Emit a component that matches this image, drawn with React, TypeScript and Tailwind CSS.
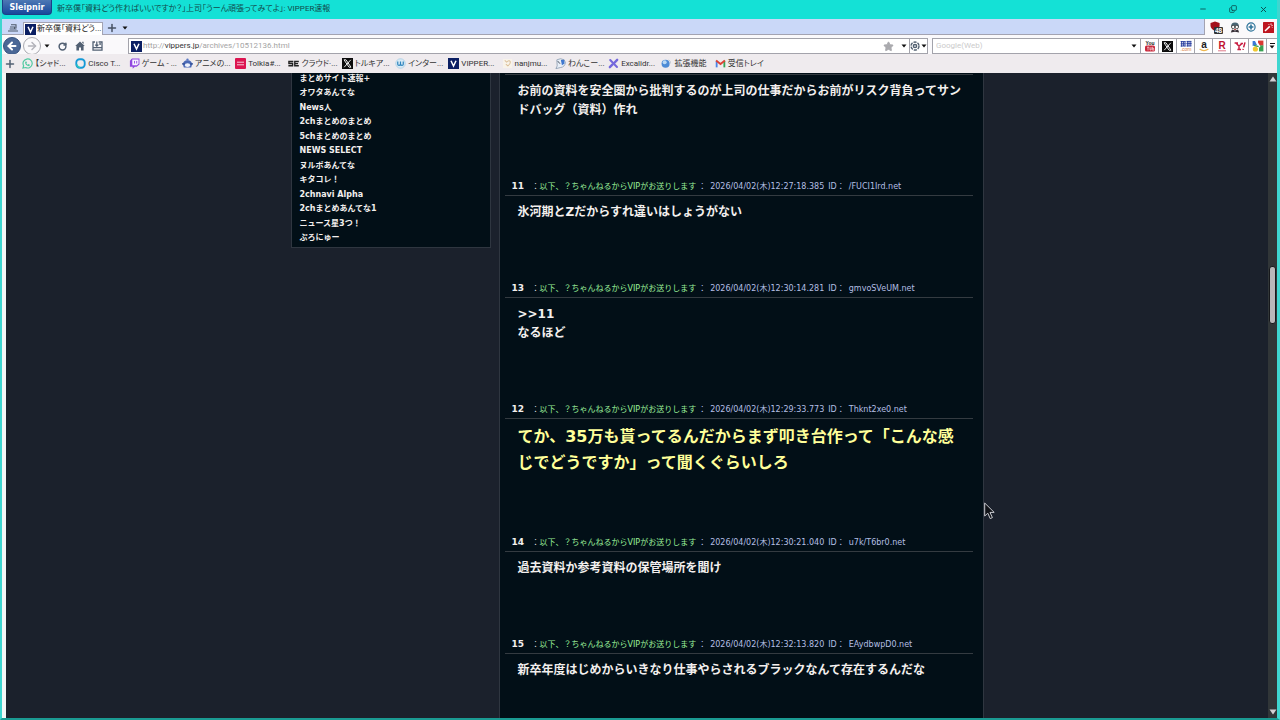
import React from 'react';
import { Minus, Copy, X, RotateCw, Star, ArrowLeft, ArrowRight, Plus } from 'lucide-react';

const sidebarLinks = [
  'まとめサイト速報+',
  'オワタあんてな',
  'News人',
  '2chまとめのまとめ',
  '5chまとめのまとめ',
  'NEWS SELECT',
  'ヌルポあんてな',
  'キタコレ！',
  '2chnavi Alpha',
  '2chまとめあんてな1',
  'ニュース星3つ！',
  'ぷろにゅー',
];

interface Post {
  no: string;
  date: string;
  id: string;
  lines: string[];
  big?: boolean;
}

const posts: Post[] = [
  { no: '11', date: '2026/04/02(木)12:27:18.385', id: '/FUCI1Ird.net', lines: ['氷河期とZだからすれ違いはしょうがない'] },
  { no: '13', date: '2026/04/02(木)12:30:14.281', id: 'gmvoSVeUM.net', lines: ['>>11', 'なるほど'] },
  {
    no: '12',
    date: '2026/04/02(木)12:29:33.773',
    id: 'Thknt2xe0.net',
    lines: ['てか、35万も貰ってるんだからまず叩き台作って「こんな感じでどうですか」って聞くぐらいしろ'],
    big: true,
  },
  { no: '14', date: '2026/04/02(木)12:30:21.040', id: 'u7k/T6br0.net', lines: ['過去資料か参考資料の保管場所を聞け'] },
  {
    no: '15',
    date: '2026/04/02(木)12:32:13.820',
    id: 'EAydbwpD0.net',
    lines: ['新卒年度はじめからいきなり仕事やらされるブラックなんて存在するんだな'],
  },
];

const VIcon = () => (
  <svg viewBox="0 0 11 11" className="size-[11px] shrink-0">
    <rect width="11" height="11" fill="#0b1f63" />
    <path d="M3 2.8 L5.5 8 L8 2.8" fill="none" stroke="#fff" strokeWidth="1.5" />
  </svg>
);

const XIcon = () => (
  <svg viewBox="0 0 11 11" className="size-[11px] shrink-0">
    <rect width="11" height="11" fill="#0c0c0c" />
    <path d="M2 1.8 H4 L9 9.2 H7 Z M8.8 1.8 L2.2 9.2" fill="none" stroke="#fff" strokeWidth="0.9" />
  </svg>
);

const Caret = () => (
  <svg viewBox="0 0 6 4" className="h-1 w-1.5 shrink-0">
    <path d="M0.5 0.5 H5.5 L3 3.5 Z" fill="#111" />
  </svg>
);

const bookmarks = [
  {
    name: '【シャド...',
    icon: (
      <svg viewBox="0 0 12 12" className="size-[11px] shrink-0" fill="none" stroke="#4fc9a0" strokeWidth="1.3">
        <path d="M1 11 L1.8 8.4 A5 4.9 0 1 1 4 10.4 Z" />
        <path d="M4 4 C4 7 5.4 8.4 8.2 8.2 M4 4 L5 5.2 M8.2 8.2 L7 7" />
      </svg>
    ),
  },
  {
    name: 'Cisco T...',
    icon: (
      <svg viewBox="0 0 12 12" className="size-[11px] shrink-0" fill="none">
        <rect x="1.4" y="1.4" width="9.2" height="9.2" rx="3.6" stroke="#1499d6" strokeWidth="2" />
        <path d="M2 7 Q2.6 10 5.6 10.5" stroke="#2cc7c0" strokeWidth="1.6" />
      </svg>
    ),
  },
  {
    name: 'ゲーム - ...',
    icon: (
      <svg viewBox="0 0 12 12" className="size-[11px] shrink-0">
        <path d="M1 3 L3.2 0.6 H11.4 V7 L8.4 9.6 H6.4 L4 11.8 V9.6 H1 Z" fill="#9147e0" />
        <path d="M3.6 1.6 H10.4 V6.4 L8.6 8 H3.6 Z" fill="#f7f1ff" />
        <path d="M6 3.2 V6 M8.4 3.2 V6" stroke="#9147e0" strokeWidth="1" />
      </svg>
    ),
  },
  {
    name: 'アニメの...',
    icon: (
      <svg viewBox="0 0 12 12" className="size-[11px] shrink-0">
        <path d="M1 7 Q1 2.6 6 2.4 Q11 2.6 11 7 L10 10.4 H2 Z" fill="#4b69b5" />
        <circle cx="6" cy="1.8" r="1.3" fill="#5b7ac4" />
        <ellipse cx="6" cy="7.8" rx="3" ry="2" fill="#eef2fb" />
        <path d="M0 6.4 H3 M9 6.4 H12" stroke="#2f4b92" strokeWidth="1.4" />
      </svg>
    ),
  },
  {
    name: 'Tolkia#...',
    icon: (
      <svg viewBox="0 0 11 11" className="size-[11px] shrink-0">
        <rect width="11" height="11" rx="1" fill="#dc1550" />
        <path d="M2 4.2 H9 M2 6.8 H9" stroke="#f9c9d8" strokeWidth="1" />
      </svg>
    ),
  },
  {
    name: 'クラウド·...',
    icon: (
      <svg viewBox="0 0 12 12" className="size-[11px] shrink-0" fill="none" stroke="#222" strokeWidth="1.5">
        <path d="M5.8 3.8 H1 V6 H5 V8.4 H0.4" />
        <path d="M11.8 3.8 H7.4 V8.4 H11.8 M7.4 6.1 H11" />
      </svg>
    ),
  },
  { name: 'トルキア...', icon: <XIcon /> },
  {
    name: 'インター...',
    icon: (
      <svg viewBox="0 0 12 12" className="size-[11px] shrink-0" fill="none">
        <circle cx="6" cy="6" r="5.2" fill="#d8eaf5" stroke="#a5cbe2" strokeWidth="0.8" />
        <path d="M3 3.8 V6.8 Q3 8 4.4 8 Q6 8 6 6.6 V3.8 M6 6.6 Q6 8 7.6 8 Q9 8 9 6.8 V3.8" stroke="#2d84bd" strokeWidth="1.3" />
      </svg>
    ),
  },
  { name: 'VIPPER...', icon: <VIcon /> },
  {
    name: 'nanjmu...',
    icon: (
      <svg viewBox="0 0 12 12" className="size-[11px] shrink-0">
        <rect x="1" y="1" width="10" height="10" fill="#f8f3ea" />
        <path d="M3 2.6 L5 4.4 Q8 1.6 9 4 Q9.4 6.6 6.4 8.6 L4.2 6.6" fill="none" stroke="#dcc09a" strokeWidth="1.1" />
      </svg>
    ),
  },
  {
    name: 'わんこー...',
    icon: (
      <svg viewBox="0 0 12 12" className="size-[11px] shrink-0">
        <path d="M2 2 Q6 -0.4 10 2 L11.4 5 Q10.6 10 6 10.4 L1 11.6 L2.4 8.6 Z" fill="#e9eff7" stroke="#7f93a8" strokeWidth="0.8" />
        <path d="M6.4 2.2 L10 2 L10.4 6 L7.6 8 Z" fill="#3f78cf" />
        <path d="M3 3.4 L5.4 6.2" stroke="#394452" strokeWidth="1" />
      </svg>
    ),
  },
  {
    name: 'Excalidr...',
    icon: (
      <svg viewBox="0 0 12 12" className="size-[11px] shrink-0" fill="none" stroke="#7468dc" strokeLinecap="round">
        <path d="M2.4 2.2 L9.8 9.8" strokeWidth="2.2" />
        <path d="M10 2 L7 5.2 M5 7 L2 10" strokeWidth="2.6" />
      </svg>
    ),
  },
  {
    name: '拡張機能',
    icon: (
      <svg viewBox="0 0 12 12" className="size-[11px] shrink-0">
        <circle cx="5" cy="6.2" r="4.4" fill="#4d8bd6" />
        <circle cx="4" cy="4.6" r="2.2" fill="#b9d8f5" />
        <path d="M8.4 2 Q11 3 10.4 6" stroke="#c3c9d2" fill="none" />
      </svg>
    ),
  },
  {
    name: '受信トレイ',
    icon: (
      <svg viewBox="0 0 12 12" className="size-[11px] shrink-0" fill="none" strokeWidth="2">
        <path d="M1.8 10.2 V3" stroke="#4a84e8" />
        <path d="M10.2 10.2 V3" stroke="#36a455" />
        <path d="M1.2 2.8 L6 6.6 L10.8 2.8" stroke="#dc4236" />
      </svg>
    ),
  },
];

const searchEngines = [
  {
    name: 'YouTube',
    icon: (
      <svg viewBox="0 0 12 12" className="size-3" fontFamily="Liberation Sans" fontWeight="bold">
        <text x="6" y="5" fontSize="5" textAnchor="middle" fill="#222">You</text>
        <rect x="1" y="5.6" width="10" height="6" rx="1.6" fill="#c9283b" />
        <path d="M3 7.2 H5 M4 7.2 V10.4 M6 7.2 V10 H7.2 V7.2 M8.6 6.8 V10.2 H9.8 V8.4 H8.6" stroke="#fff" strokeWidth="0.6" fill="none" />
      </svg>
    ),
  },
  { name: 'X', icon: <XIcon /> },
  {
    name: '価格.com',
    icon: (
      <svg viewBox="0 0 12 12" className="size-3">
        <path d="M0.6 1.6 H5.6 M0.6 3.8 H5.6 M0.6 6 H5.6 M1.6 1 V6.6 M3.4 1.6 V6 M5 1.4 V6.4 M6.6 1.4 H11.4 M6.4 3.6 H11.6 M6.6 6 H11.4 M7.4 1 V6.4 M9 1.4 V6 M10.8 1.4 V6" stroke="#23399c" strokeWidth="0.9" />
        <text x="6" y="11" fontSize="5" textAnchor="middle" fill="#d67a44" fontFamily="Liberation Sans">.com</text>
      </svg>
    ),
  },
  {
    name: 'Amazon',
    icon: (
      <svg viewBox="0 0 12 12" className="size-3">
        <text x="6" y="8" fontSize="10" fontWeight="bold" textAnchor="middle" fill="#222" fontFamily="Liberation Sans">a</text>
        <path d="M1.6 9 Q6 12.2 10.4 9" stroke="#efb64d" strokeWidth="1.2" fill="none" />
      </svg>
    ),
  },
  {
    name: '楽天',
    icon: (
      <svg viewBox="0 0 12 12" className="size-3">
        <text x="6" y="9.4" fontSize="10" fontWeight="bold" textAnchor="middle" fill="#bf1230" fontFamily="Liberation Sans">R</text>
        <path d="M2 10.8 H10" stroke="#d5546a" strokeWidth="0.8" />
      </svg>
    ),
  },
  {
    name: 'Yahoo!',
    icon: (
      <svg viewBox="0 0 12 12" className="size-3" fill="none" stroke="#c81e42" strokeWidth="1.5">
        <path d="M0.6 3 H4 M2 3 L5 6.2 L8 3.4 M5 6.2 V9.6 M3.4 9.6 H7 M6.6 3.4 H9" />
        <path d="M11 2.4 L9.6 7.4 M9.2 8.8 L9 9.8" />
      </svg>
    ),
  },
  {
    name: 'Google',
    icon: (
      <svg viewBox="0 0 12 12" className="size-3">
        <rect x="6" y="0.6" width="5.4" height="5" fill="#d93a32" />
        <rect x="7" y="5.4" width="4.4" height="6" fill="#37a052" />
        <path d="M0.6 1 H3 L5 5 L0.6 6 Z" fill="#3c79d8" />
        <circle cx="3.4" cy="9" r="2.6" fill="#f0c72f" />
        <path d="M4.4 1.4 L7.4 6.4 L5.6 8" stroke="#fff" strokeWidth="1.6" fill="none" />
        <path d="M2 5.4 L6.6 6.6" stroke="#37a052" strokeWidth="1.4" />
      </svg>
    ),
  },
];

const TitleBar = () => (
  <div className="flex h-[19px] shrink-0 items-start bg-[#14e1d6]">
    <button className="h-[15px] w-[50px] rounded-b-sm border border-t-0 border-[#1d3f86] bg-linear-to-b from-[#4d78b4] to-[#17489c] font-['DejaVu_Sans'] text-[8px] leading-4 font-bold text-white">
      Sleipnir
    </button>
    <h1 className="ml-[5px] flex-1 truncate text-[8px] leading-[18px] text-[#124b4c]">
      新卒僕「資料どう作ればいいですか？」上司「うーん頑張ってみてよ」: VIPPER速報
    </h1>
    <div className="flex h-[18px] items-center gap-[22px] pr-[9px] text-[#0b4c4c]">
      <button aria-label="最小化"><Minus className="size-2" strokeWidth={2.5} /></button>
      <button aria-label="元に戻す"><Copy className="size-2 -scale-x-100 rotate-180" strokeWidth={2.5} /></button>
      <button aria-label="閉じる"><X className="size-[9px]" strokeWidth={2.5} /></button>
    </div>
  </div>
);

const TabBar = () => (
  <div className="flex h-4 shrink-0">
    <div className="flex flex-1 items-end border-r border-b border-[#a3a3b2] bg-[#cad8f8]">
      <button aria-label="タブ一覧" className="flex h-[13px] w-[21px] items-center justify-center">
        <svg viewBox="0 0 10 8" className="h-2 w-2.5" fill="none" stroke="#4d5868" strokeWidth="1.1">
          <path d="M3 0.8 H8 V4 M2 3 H6.6 V5 M0 7 H10 M1.6 5 H8.6" />
        </svg>
      </button>
      <button className="-mb-px flex h-[13px] w-20 items-center gap-px border border-b-0 border-[#a3a3b2] bg-white pl-px text-[8px] text-[#222]">
        <VIcon />
        <span className="whitespace-nowrap">新卒僕「資料どう...</span>
      </button>
      <button aria-label="新しいタブ" className="flex h-[13px] w-[18px] items-center justify-center text-[#475264]">
        <Plus className="size-3" strokeWidth={3} />
      </button>
      <button aria-label="タブメニュー" className="flex h-[13px] w-2 items-center justify-center">
        <Caret />
      </button>
    </div>
    <div className="flex w-[72px] items-center justify-between bg-[#faf9fb] pr-[3px] pl-[5px]">
      <button aria-label="広告ブロック">
        <svg viewBox="0 0 13 13" className="size-[13px]">
          <path d="M0.5 2 L5 0.6 L9.6 2 V5 Q9 8 5 10 Q1 8 0.5 5 Z" fill="#a3101c" />
          <rect x="4" y="6" width="9" height="7" rx="1" fill="#333" />
          <text x="8.5" y="11.8" fontSize="6.5" fontWeight="bold" textAnchor="middle" fill="#fff" fontFamily="Liberation Sans">48</text>
        </svg>
      </button>
      <button aria-label="スクリプト">
        <svg viewBox="0 0 10 11" className="h-[11px] w-2.5">
          <path d="M1 5 Q1 0.6 5 0.6 Q9 0.6 9 5 Z" fill="#4a6674" />
          <circle cx="3.2" cy="5" r="1.7" fill="#fff" stroke="#333" strokeWidth="0.8" />
          <circle cx="6.8" cy="5" r="1.7" fill="#fff" stroke="#333" strokeWidth="0.8" />
          <path d="M0.8 10.6 L2 7.4 L5 8.6 L8 7.4 L9.2 10.6 L5 9.8 Z" fill="#383038" />
          <path d="M4 7.4 H6" stroke="#bd3b3b" />
        </svg>
      </button>
      <button aria-label="拡張">
        <svg viewBox="0 0 10 10" className="size-2.5" fill="none" stroke="#2d7399">
          <circle cx="5" cy="5" r="4.1" strokeWidth="1.2" />
          <path d="M5 2.6 V7.4 M2.6 5 H7.4" strokeWidth="1.6" />
        </svg>
      </button>
      <button aria-label="マジック">
        <svg viewBox="0 0 11 11" className="size-[11px]">
          <rect width="11" height="11" rx="0.6" fill="#bd1620" />
          <path d="M2 9 L6.8 4.4" stroke="#fff" strokeWidth="1.5" />
          <path d="M8 1.4 V3 M9.8 3.4 H8.4 M5.4 2 L6.2 2.8 M9.4 5.6 L8.6 4.8" stroke="#fff" strokeWidth="0.8" />
        </svg>
      </button>
    </div>
  </div>
);

const AddressBar = () => (
  <div className="flex h-[19px] shrink-0 items-center bg-[#faf9fb] pt-[3px] pl-px">
    <div className="flex w-[125px] items-center text-[#526073]">
      <button aria-label="戻る" className="flex size-[18px] items-center justify-center rounded-full border border-[#35527f] bg-[#4a6796] text-white">
        <ArrowLeft className="size-3" strokeWidth={4} />
      </button>
      <button aria-label="進む" className="ml-[2px] flex size-[18px] items-center justify-center rounded-full border border-[#aaaab0] text-[#b3b3ba]">
        <ArrowRight className="size-3" strokeWidth={3} />
      </button>
      <button aria-label="履歴" className="ml-[3px]"><Caret /></button>
      <button aria-label="更新" className="ml-2"><RotateCw className="size-[9px]" strokeWidth={4} /></button>
      <button aria-label="ホーム" className="ml-2">
        <svg viewBox="0 0 10 10" className="size-2.5" fill="#526073">
          <path d="M5 0.4 L9.8 5 H8.6 V9.6 H6 V6.6 H4 V9.6 H1.4 V5 H0.2 Z M7.2 0.8 H8.6 V3 L7.2 1.8 Z" />
        </svg>
      </button>
      <button aria-label="保存" className="ml-[7px]">
        <svg viewBox="0 0 11 10" className="h-2.5 w-[11px]" fill="none" stroke="#526073" strokeWidth="1.3">
          <path d="M3 1 H1 V9.2 H10 V1 H6.6 M1 6.6 H10 M4.8 0.6 V5 M3.2 3.6 L4.8 5.2 L6.4 3.6 M7.2 3 H9" />
        </svg>
      </button>
    </div>
    <div className="flex h-4 flex-1 items-center border border-[#a3a3ab] bg-white pl-[2px]">
      <VIcon />
      <label className="relative ml-px flex-1 text-[8px] leading-4 text-[#a4a4a4]">
        <input aria-label="アドレス" className="absolute inset-0 w-full bg-transparent outline-none" />
        http://<span className="text-[#333]">vippers.jp</span>/archives/10512136.html
      </label>
      <button aria-label="お気に入り"><Star className="size-[11px] fill-[#aaaaae] text-[#aaaaae]" /></button>
      <button aria-label="アドレス履歴" className="ml-[5px] flex h-3.5 w-2.5 items-center justify-center"><Caret /></button>
      <button aria-label="エンジン切替" className="flex h-3.5 w-[18px] items-center justify-between border-l border-[#a3a3ab]">
        <svg viewBox="0 0 10 10" className="size-2.5" fill="none" stroke="#536171">
          <circle cx="5" cy="5" r="4" strokeWidth="1.4" strokeDasharray="3.2 1" />
          <circle cx="5" cy="5" r="1.6" strokeWidth="1.5" />
        </svg>
        <Caret />
      </button>
    </div>
    <div className="ml-1 flex h-4 w-[209px] items-center border border-[#a3a3ab] bg-white pr-[3px] pl-[3px]">
      <input
        aria-label="検索"
        placeholder="Google(Web)"
        className="min-w-0 flex-1 text-[8px] leading-4 outline-none placeholder:text-[#cbcbcb]"
      />
      <button aria-label="検索履歴"><Caret /></button>
    </div>
    {searchEngines.map((engine) => (
      <button
        key={engine.name}
        aria-label={engine.name}
        className="flex h-4 w-[18px] items-center justify-center border-y border-r border-[#a3a3ab] bg-white"
      >
        {engine.icon}
      </button>
    ))}
    <button aria-label="その他" className="flex h-4 w-2.5 flex-col items-center justify-center gap-px border-y border-[#a3a3ab] bg-white">
      <span className="h-px w-[5px] bg-[#111]" />
      <Caret />
    </button>
  </div>
);

const BookmarkBar = () => (
  <nav className="flex h-[19px] shrink-0 items-center bg-[#efebee] pl-[2px] text-[#526073]">
    <button aria-label="追加"><Plus className="size-3" strokeWidth={3} /></button>
    <div className="ml-1.5 grid w-[746px] grid-cols-14">
      {bookmarks.map((bookmark) => (
        <a key={bookmark.name} href="#" className="flex items-center gap-[2px] text-[8px] leading-[14px] whitespace-nowrap text-[#333]">
          {bookmark.icon}
          {bookmark.name}
        </a>
      ))}
    </div>
  </nav>
);

const PostBody: React.FC<{ lines: string[]; big?: boolean }> = ({ lines, big }) => (
  <div
    className={
      big
        ? 'pt-[5px] pr-2 pb-[58px] pl-[13px] text-[16px] leading-[26px] font-bold text-[#ffff99]'
        : 'pt-[7px] pr-2 pb-[58px] pl-[13px] text-[12px] leading-[19px] font-bold text-[#f3efee]'
    }
  >
    {lines.map((line) => (
      <p key={line}>{line}</p>
    ))}
  </div>
);

const PostItem: React.FC<{ post: Post }> = ({ post }) => (
  <article>
    <header className="flex h-[18px] items-start border-b border-[#343b41] pl-[7px] text-[8px] leading-[18px] whitespace-pre text-[#b4bfe4]">
      <span className="w-5 text-[9px] leading-4 font-bold text-[#f3efee]">{post.no}</span>
      <span className="text-[#d7dcdd]">：</span>
      <span className="text-[#9bf09a]">以下、？ちゃんねるからVIPがお送りします</span>
      <span className="ml-0.5">：</span>
      <time className="ml-1">{post.date}</time>
      <span className="ml-1">ID：</span>
      <span className="ml-1">{post.id}</span>
    </header>
    <PostBody lines={post.lines} big={post.big} />
  </article>
);

export default function App(): JSX.Element {
  return (
    <div className="flex h-screen flex-col overflow-hidden border-r-3 border-b-2 border-l-2 border-x-[#3fd6d0] border-b-[#1a9a92] bg-[#14e1d6] font-['Roboto','Noto_Sans_CJK_JP',sans-serif]">
      <div className="flex shrink-0 flex-col [font-feature-settings:'palt']">
        <TitleBar />
        <TabBar />
        <AddressBar />
        <BookmarkBar />
      </div>
      <div className="flex min-h-0 flex-1 border-l-4 border-[#f4f6f6] bg-[#1b212c] font-['DejaVu_Sans','Noto_Sans_CJK_JP',sans-serif]">
        <main className="relative flex flex-1 items-start justify-center gap-2 self-stretch overflow-hidden">
          <aside className="w-[200px] border border-t-0 border-[#2f3640] bg-[#020f17] pt-px pb-1 pl-2">
            <ul className="flex h-[169px] flex-col justify-between text-[8px] leading-[10px] font-bold text-[#f3efee]">
              {sidebarLinks.map((link) => (
                <li key={link}>
                  <a href="#">{link}</a>
                </li>
              ))}
            </ul>
          </aside>
          <section className="w-[485px] border-x border-[#2f3640] bg-[#020f17] pt-px pr-2.5 pl-[5px]">
            <div className="border-t border-[#343b41]">
              <PostBody lines={['お前の資料を安全圏から批判するのが上司の仕事だからお前がリスク背負ってサンドバッグ（資料）作れ']} />
            </div>
            {posts.map((post) => (
              <PostItem key={post.no} post={post} />
            ))}
          </section>
          {/* mouse pointer */}
          <svg viewBox="0 0 12 18" className="absolute top-[429px] left-[978px] h-[18px] w-3">
            <path d="M0.7 1 V14 L3.8 11.2 L6.2 16.6 L8.4 15.6 L6 10.4 H10.2 Z" fill="#111318" stroke="#c9cbd0" strokeWidth="1" />
          </svg>
        </main>
        <div className="flex w-[9px] flex-col items-center bg-[#313638] py-[3px]">
          <svg viewBox="0 0 8 6" className="h-1.5 w-2"><path d="M4 0.5 L7.5 5.5 H0.5 Z" fill="#d2cfd3" /></svg>
          <div className="mt-[184px] h-[58px] w-[7px] rounded-[3px] border border-[#17191c] bg-[#b9b7b9]" />
          <svg viewBox="0 0 8 6" className="mt-auto h-1.5 w-2"><path d="M4 5.5 L7.5 0.5 H0.5 Z" fill="#d2cfd3" /></svg>
        </div>
      </div>
    </div>
  );
}
